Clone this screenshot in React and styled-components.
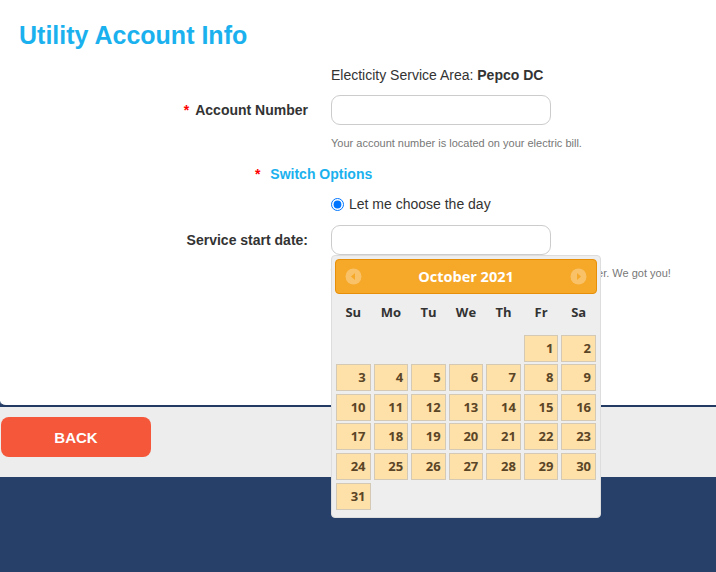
import React from "react";
import styled, { createGlobalStyle } from "styled-components";

const GlobalStyle = createGlobalStyle`
  html, body {
    margin: 0;
    padding: 0;
    background: #27406a;
  }
  body {
    font-family: "Liberation Sans", Arial, sans-serif;
    color: #333;
  }
`;

const Page = styled.div`
  width: 716px;
  height: 572px;
  overflow: hidden;
  display: flex;
  flex-direction: column;
  background: #27406a;
`;

const Card = styled.section`
  position: relative;
  height: 407px;
  flex-shrink: 0;
  box-sizing: border-box;
  background: #fff;
  border-bottom: 2px solid #233a63;
  border-bottom-left-radius: 6px;
  padding: 20px 0 0 19px;
`;

const Title = styled.h2`
  margin: 0 0 17px;
  font-size: 25px;
  line-height: 30px;
  font-weight: 700;
  color: #1bb1ee;
`;

const Form = styled.div`
  display: grid;
  grid-template-columns: 289px 1fr;
  column-gap: 23px;
  align-items: center;
`;

const Label = styled.label`
  grid-column: 1;
  text-align: right;
  font-size: 14px;
  font-weight: 700;
  color: #333;
  margin-top: ${(p) => p.$mt || 0}px;
`;

const Star = styled.span`
  color: #f00;
  margin-right: 6px;
`;

const Value = styled.div`
  grid-column: 2;
  position: relative;
  font-size: 14px;
  line-height: 16px;
  color: #333;
  margin-top: ${(p) => p.$mt || 0}px;
`;

const Field = styled.input`
  display: block;
  width: 220px;
  height: 30px;
  box-sizing: border-box;
  border: 1px solid #ccc;
  border-radius: 9px;
  outline: none;
`;

const Help = styled.div`
  grid-column: 2;
  font-size: 11px;
  line-height: 13px;
  color: #777;
  white-space: nowrap;
  margin-top: ${(p) => p.$mt || 0}px;
`;

const Section = styled.div`
  grid-column: 1 / -1;
  padding-left: 236px;
  font-size: 14px;
  line-height: 16px;
  font-weight: 700;
  color: #1bb1ee;
  margin-top: 16px;
`;

const RadioRow = styled.label`
  grid-column: 2;
  display: flex;
  align-items: center;
  gap: 5px;
  height: 16px;
  font-size: 14px;
  color: #333;
  margin-top: 14px;
  input {
    margin: 0;
    width: 13px;
    height: 13px;
  }
`;

const Picker = styled.div`
  position: absolute;
  top: 100%;
  left: 0;
  z-index: 5;
  width: 270px;
  box-sizing: border-box;
  padding: 3px 3px 7px;
  background: #eee;
  border: 1px solid #ddd;
  border-radius: 4px;
  font-family: "Open Sans", "DejaVu Sans", sans-serif;
`;

const PickerHead = styled.div`
  height: 35px;
  box-sizing: border-box;
  display: flex;
  align-items: center;
  justify-content: space-between;
  padding: 0 9px;
  background: #f6a828;
  border: 1px solid #e78f08;
  border-radius: 4px;
  color: #fff;
  font-size: 14.5px;
  font-weight: 700;
`;

const Days = styled.div`
  display: grid;
  grid-template-columns: repeat(7, 1fr);
  column-gap: 3px;
  row-gap: 2.6px;
  padding: 0 1px;
`;

const DayName = styled.div`
  height: 38px;
  line-height: 37px;
  text-align: center;
  font-size: 13px;
  font-weight: 700;
  color: #333;
`;

const Day = styled.div`
  height: 27px;
  box-sizing: border-box;
  padding-right: 4px;
  text-align: right;
  line-height: 25px;
  font-size: 13px;
  font-weight: 700;
  color: #5a4526;
  background: #fee0a9;
  border: 1px solid #d3c9b4;
  grid-column: ${(p) => p.$col || "auto"};
`;

const Bar = styled.div`
  height: 70px;
  flex-shrink: 0;
  background: #ededed;
  padding-top: 10px;
  box-sizing: border-box;
`;

const BackButton = styled.button`
  margin-left: 1px;
  width: 150px;
  height: 40px;
  border: none;
  border-radius: 8px;
  background: #f4573a;
  color: #fff;
  font-family: "Liberation Sans", Arial, sans-serif;
  font-size: 15px;
  font-weight: 700;
`;

const Arrow = ({ dir }) => (
  <svg width="17" height="17" viewBox="0 0 17 17">
    <circle cx="8.5" cy="8.5" r="8" fill="#fff" opacity="0.3" />
    {dir === "prev" ? (
      <path d="M10 5 L6 8.5 L10 12 Z" fill="#f6a828" />
    ) : (
      <path d="M7 5 L11 8.5 L7 12 Z" fill="#f6a828" />
    )}
  </svg>
);

const dayNames = ["Su", "Mo", "Tu", "We", "Th", "Fr", "Sa"];
const dates = Array.from({ length: 31 }, (_, i) => i + 1);

export default function App() {
  return (
    <Page>
      <GlobalStyle />
      <Card>
        <Title>Utility Account Info</Title>
        <Form>
          <Value>
            Electicity Service Area: <b>Pepco DC</b>
          </Value>
          <Label $mt={12}>
            <Star>*</Star>Account Number
          </Label>
          <Value $mt={12}>
            <Field type="text" />
          </Value>
          <Help $mt={12}>Your account number is located on your electric bill.</Help>
          <Section>
            <Star>*</Star> Switch Options
          </Section>
          <RadioRow>
            <input type="radio" defaultChecked name="switch" />
            Let me choose the day
          </RadioRow>
          <Label $mt={13}>Service start date:</Label>
          <Value $mt={13}>
            <Field type="text" />
            <Picker>
              <PickerHead>
                <Arrow dir="prev" />
                <span>October 2021</span>
                <Arrow dir="next" />
              </PickerHead>
              <Days>
                {dayNames.map((d) => (
                  <DayName key={d}>{d}</DayName>
                ))}
                {dates.map((d) => (
                  <Day key={d} $col={d === 1 ? 6 : undefined}>
                    {d}
                  </Day>
                ))}
              </Days>
            </Picker>
          </Value>
          <Help $mt={12}>We'll handle everything with your current energy supplier. We got you!</Help>
        </Form>
      </Card>
      <Bar>
        <BackButton>BACK</BackButton>
      </Bar>
    </Page>
  );
}
